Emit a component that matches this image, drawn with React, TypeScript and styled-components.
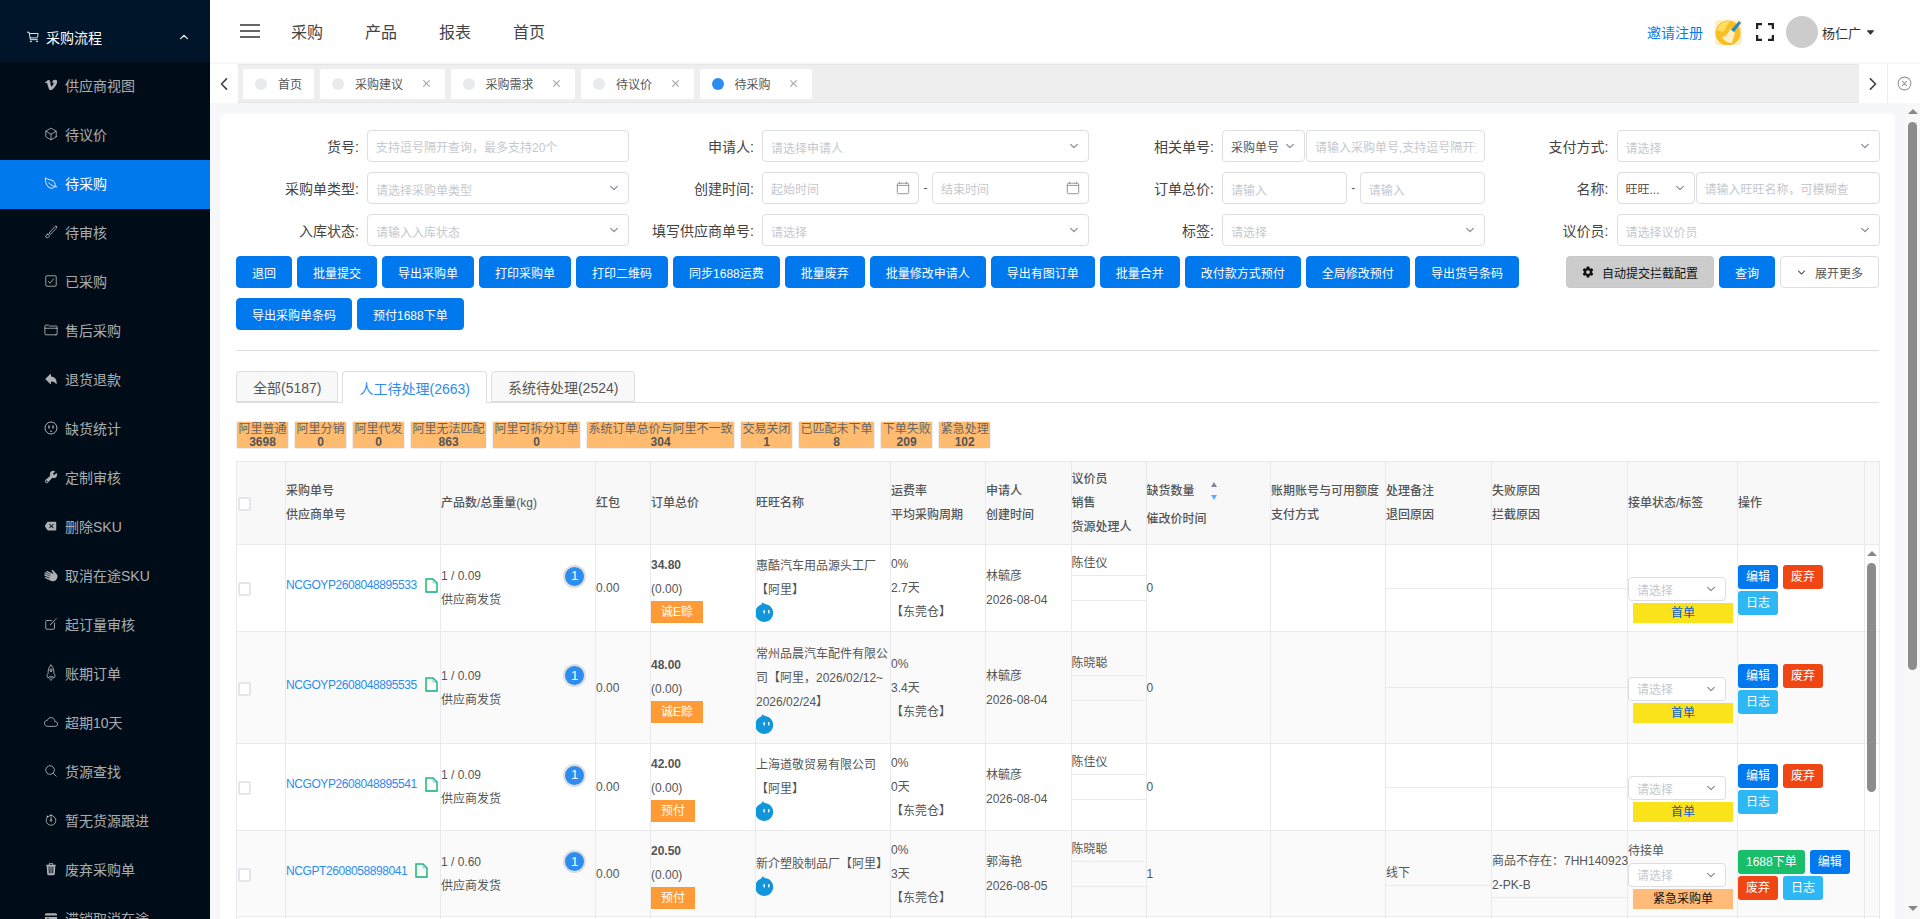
import React from 'react';
import styled, { createGlobalStyle } from 'styled-components';
import {
  IoCartOutline, IoLogoVimeo, IoCubeOutline, IoLeafOutline, IoBrushOutline, IoCheckboxOutline,
  IoFolderOutline, IoArrowUndo, IoBuild, IoBackspace, IoHandLeft, IoCreateOutline, IoRocketOutline,
  IoCloudOutline, IoSearchOutline, IoStopwatchOutline, IoTrash, IoCard, IoChevronUp, IoChevronDown,
  IoChevronBack, IoChevronForward, IoClose, IoCloseCircleOutline, IoCalendarClearOutline, IoSettingsSharp,
  IoCaretDown,
} from 'react-icons/io5';

const GlobalStyle = createGlobalStyle`
  html, body { margin: 0; padding: 0; height: 100%; overflow: hidden; }
  body {
    font-family: "Liberation Sans", "Noto Sans CJK SC", sans-serif;
    font-size: 12px;
    color: #555;
  }
  * { box-sizing: border-box; }
`;

const Page = styled.div`
  display: flex;
  height: 100vh;
  overflow: hidden;
`;

const Sidebar = styled.aside`
  flex: 0 0 210px;
  background: #000c17;
  overflow: hidden;
`;

const MenuTitle = styled.div`
  height: 62px;
  display: flex;
  align-items: center;
  gap: 6px;
  padding: 11px 20px 0 26px;
  background: #001529;
  color: #fff;
  font-size: 14px;
  svg:last-child { margin-left: auto; }
`;

const MenuItem = styled.div<{ $active?: boolean }>`
  height: 49px;
  display: flex;
  align-items: center;
  gap: 7px;
  padding: 0 0 3px 44px;
  font-size: 14px;
  background: ${p => (p.$active ? '#0078ee' : 'transparent')};
  color: ${p => (p.$active ? '#fff' : 'rgba(255,255,255,.68)')};
`;

const LyingHand = styled(IoHandLeft)`
  transform: rotate(-65deg);
`;

const UprightRocket = styled(IoRocketOutline)`
  transform: rotate(-45deg);
`;

const Main = styled.div`
  flex: 1;
  min-width: 0;
  display: flex;
  flex-direction: column;
`;

const Header = styled.header`
  height: 64px;
  flex: none;
  display: flex;
  align-items: center;
  padding: 0 44px 0 30px;
  background: #fff;
`;

const NavLink = styled.span`
  font-size: 16px;
  color: #444;
  margin-right: 42px;
  padding-bottom: 3px;
`;

const Burger = styled.svg`
  margin: -3px 31px 0 0;
`;

const HeaderRight = styled.div`
  margin-left: auto;
  display: flex;
  align-items: center;
  color: #333;
  font-size: 13px;
`;

const Invite = styled.span`
  color: #0a7ce8;
  font-size: 14px;
  margin: 0 12px 0 0;
`;

const Avatar = styled.span`
  width: 32px;
  height: 32px;
  border-radius: 50%;
  background: #ccc;
  margin: 0 4px 0 12px;
`;

const FullscreenBtn = styled.svg`
  margin-left: 14px;
`;

const UserCaret = styled(IoCaretDown)`
  margin-left: 4px;
`;

const TabBar = styled.div`
  height: 39px;
  flex: none;
  display: flex;
  background: #fff;
  box-shadow: 0 -1px 2px rgba(0, 0, 0, .06);
`;

const ArrowBox = styled.div<{ $w: number }>`
  flex: 0 0 ${p => p.$w}px;
  display: flex;
  align-items: center;
  justify-content: center;
  color: #444;
`;

const TabTrack = styled.div`
  flex: 1;
  display: flex;
  align-items: center;
  gap: 6px;
  padding-left: 5px;
  background: #eee;
  border-top: 1px solid #e6e6e6;
  border-bottom: 1px solid #e6e6e6;
`;

const PageTab = styled.div`
  height: 30px;
  display: flex;
  align-items: center;
  padding: 0 12px;
  background: #fff;
  border-radius: 2px;
  color: #555;
`;

const Dot = styled.span<{ $on?: boolean }>`
  width: 12px;
  height: 12px;
  border-radius: 50%;
  margin-right: 11px;
  background: ${p => (p.$on ? '#2d8cf0' : '#e8eaec')};
`;

const TabClose = styled.span`
  display: flex;
  margin-left: 16.5px;
  color: #aaa;
`;

const CloseAll = styled.div`
  flex: 0 0 33px;
  display: flex;
  align-items: center;
  justify-content: center;
  color: #999;
  border-left: 1px solid #eee;
`;

const Content = styled.main`
  position: relative;
  flex: 1;
  min-height: 0;
  overflow: hidden;
  background: #f5f7f9;
  padding: 11px 25px 0 10px;
`;

const Card = styled.section`
  background: #fff;
  border-radius: 4px 4px 0 0;
  padding: 16px 14px 0 16px;
`;

const FilterGrid = styled.div`
  display: grid;
  grid-template-columns: 131px 262px 133px 327px 133px 262.5px 132px 263px;
  grid-auto-rows: 32px;
  row-gap: 10px;
`;

const Label = styled.label`
  display: flex;
  align-items: center;
  justify-content: flex-end;
  padding-right: 8px;
  font-size: 14px;
  color: #444;
  white-space: nowrap;
`;

const Field = styled.div<{ $flex?: number; $w?: number; $h?: number; $pad?: number }>`
  ${p => (p.$w ? `flex: 0 0 ${p.$w}px;` : `flex: ${p.$flex ?? 1};`)}
  min-width: 0;
  height: ${p => p.$h ?? 32}px;
  display: flex;
  align-items: center;
  justify-content: space-between;
  padding: 0 ${p => p.$pad ?? 8}px;
  background: #fff;
  border: 1px solid #dcdee2;
  border-radius: 4px;
  color: #c5c8ce;
  white-space: nowrap;
  overflow: hidden;
  svg { flex: none; color: #808695; }
`;

const Hint = styled.span<{ $low?: boolean }>`
  overflow: hidden;
  padding-top: ${p => (p.$low ? 3 : 0)}px;
`;

const Value = styled.span`
  color: #555;
`;

const Compound = styled.div<{ $gap?: number }>`
  display: flex;
  align-items: center;
  gap: ${p => p.$gap ?? 1}px;
  min-width: 0;
`;

const Dash = styled.span`
  flex: 0 0 13px;
  text-align: center;
  color: #555;
`;

const ActionRow = styled.div`
  display: flex;
  justify-content: space-between;
  align-items: flex-start;
  margin-top: 10px;
  padding-right: 2px;
`;

const ActionGroup = styled.div<{ $w?: number }>`
  display: flex;
  flex-wrap: wrap;
  gap: 10px 5px;
  ${p => (p.$w ? `flex: 0 0 ${p.$w}px;` : '')}
`;

const Button = styled.button<{ $kind?: 'primary' | 'gray' | 'plain' }>`
  height: 32px;
  padding: 0 15px;
  display: inline-flex;
  align-items: center;
  gap: 8px;
  font: inherit;
  border-radius: 4px;
  border: 1px solid ${p => (p.$kind === 'gray' ? '#c8c8c8' : p.$kind === 'plain' ? '#dcdee2' : '#0078ee')};
  background: ${p => (p.$kind === 'gray' ? '#ccc' : p.$kind === 'plain' ? '#fff' : '#0078ee')};
  color: ${p => (p.$kind === 'gray' ? '#111' : p.$kind === 'plain' ? '#555' : '#fff')};
`;

const Divider = styled.hr`
  border: 0;
  border-top: 1px solid #ddd;
  margin: 20px 2px 20px 0;
`;

const ViewTabs = styled.div`
  display: flex;
  gap: 4px;
  height: 32px;
  border-bottom: 1px solid #dcdee2;
  margin-right: 2px;
`;

const ViewTab = styled.div<{ $on?: boolean }>`
  height: ${p => (p.$on ? 32 : 31)}px;
  display: flex;
  align-items: center;
  padding: 0 16px;
  font-size: 14px;
  border: 1px solid #dcdee2;
  border-bottom: ${p => (p.$on ? '0' : '1px solid #dcdee2')};
  border-radius: 4px 4px 0 0;
  background: ${p => (p.$on ? '#fff' : '#f8f8f9')};
  color: ${p => (p.$on ? '#2d8cf0' : '#555')};
`;

const ChipRow = styled.div`
  display: flex;
  gap: 5px;
  margin: 18px 0 12px;
`;

const Chip = styled.div`
  height: 28px;
  padding: 1px 1.5px 0;
  background: #ffbb6f;
  border: 1px solid #eee;
  border-radius: 2px;
  text-align: center;
  line-height: 13px;
  white-space: nowrap;
  color: #666;
  b { display: block; color: #555; }
`;

const TableWrap = styled.div`
  position: relative;
  width: 1642.5px;
`;

const Table = styled.table`
  width: 1642.5px;
  table-layout: fixed;
  border-collapse: collapse;
  background: #fff;
`;

const Th = styled.th`
  padding: 0;
  height: 83px;
  text-align: left;
  font-weight: 500;
  line-height: 24px;
  background: #f8f8f9;
  border: 1px solid #e8eaec;
  color: #555;
`;

const Row = styled.tr<{ $h: number; $even: boolean }>`
  height: ${p => p.$h}px;
  background: ${p => (p.$even ? '#fafafa' : '#fff')};
`;

const Td = styled.td`
  padding: 0;
  line-height: 24px;
  vertical-align: middle;
  border: 1px solid #e8eaec;
  color: #555;
  word-break: break-all;
`;

const CheckBox = styled.span`
  display: block;
  width: 13px;
  height: 14px;
  margin: 2px 0 0 1px;
  background: #fff;
  border: 2px solid #e4e6ea;
  border-radius: 2px;
`;

const OrderLink = styled.div`
  display: flex;
  align-items: center;
  gap: 8px;
  margin-top: -6px;
  color: #2d8cf0;
  letter-spacing: -.42px;
  white-space: nowrap;
`;

const ProductTop = styled.div`
  display: flex;
  justify-content: space-between;
  align-items: center;
  padding-right: 9px;
`;

const CountBadge = styled.span`
  width: 23px;
  height: 23px;
  display: flex;
  align-items: center;
  justify-content: center;
  border-radius: 50%;
  background: #2d8cf0;
  border: 2px solid #ddd;
  color: #fff;
  font-size: 13px;
`;

const PayTag = styled.span`
  display: block;
  width: fit-content;
  height: 22px;
  line-height: 22px;
  padding: 0 10px;
  background: #ff9b37;
  color: #fff;
`;

const Nowrap = styled.span`
  display: inline-block;
  white-space: nowrap;
`;

const WangIcon = styled.svg`
  display: block;
`;

const StackLine = styled.div<{ $last?: boolean }>`
  height: ${p => (p.$last ? 24 : 25)}px;
  line-height: 24px;
  ${p => (p.$last ? '' : 'border-bottom: 1px solid #e8eaec;')}
`;

const RuleLine = styled.div`
  border-bottom: 1px solid #e8eaec;
  white-space: nowrap;
`;

const StatusLine = styled.div`
  height: 24px;
`;

const StateTag = styled.div<{ $urgent?: boolean }>`
  width: 100px;
  height: 20px;
  line-height: 20px;
  margin: 2px 0 0 5px;
  text-align: center;
  background: ${p => (p.$urgent ? '#ffbb77' : '#fae31a')};
  color: ${p => (p.$urgent ? '#111' : '#0a5ec9')};
`;

const SelectSlot = styled.div`
  width: 98px;
`;

const OpGrid = styled.div<{ $w: number }>`
  display: flex;
  flex-wrap: wrap;
  gap: 2px 5px;
  width: ${p => p.$w}px;
  margin-top: 3px;
`;

const OpButton = styled.span<{ $bg: string }>`
  height: 24px;
  line-height: 24px;
  padding: 0 8px;
  border-radius: 3px;
  background: ${p => p.$bg};
  color: #fff;
  white-space: nowrap;
`;

const SortLine = styled.div`
  display: flex;
  align-items: center;
  gap: 16px;
  height: 32px;
`;

const SortCarets = styled.span`
  display: flex;
  flex-direction: column;
  gap: 8px;
`;

const Caret = styled.i<{ $up?: boolean; $color: string }>`
  width: 0;
  height: 0;
  border-left: 3.5px solid transparent;
  border-right: 3.5px solid transparent;
  ${p => (p.$up ? `border-bottom: 5px solid ${p.$color};` : `border-top: 5px solid ${p.$color};`)}
`;

const ScrollThumb = styled.div<{ $top: number; $h: number; $left: number }>`
  position: absolute;
  top: ${p => p.$top}px;
  left: ${p => p.$left}px;
  width: 9px;
  height: ${p => p.$h}px;
  border-radius: 5px;
  background: #8c8c8c;
`;

const ScrollArrow = styled.div<{ $top: number; $left: number; $down?: boolean }>`
  position: absolute;
  top: ${p => p.$top}px;
  left: ${p => p.$left}px;
  width: 0;
  height: 0;
  border-left: 5px solid transparent;
  border-right: 5px solid transparent;
  ${p => (p.$down ? 'border-top: 5px solid #888;' : 'border-bottom: 5px solid #888;')}
`;

const PageTrack = styled.div`
  position: absolute;
  top: 0;
  right: 0;
  bottom: 0;
  width: 15px;
  background: #f8f8f8;
`;

const menu: [React.ComponentType<{ size?: number }>, string][] = [
  [IoLogoVimeo, '供应商视图'],
  [IoCubeOutline, '待议价'],
  [IoLeafOutline, '待采购'],
  [IoBrushOutline, '待审核'],
  [IoCheckboxOutline, '已采购'],
  [IoFolderOutline, '售后采购'],
  [IoArrowUndo, '退货退款'],
  [OutletIcon, '缺货统计'],
  [IoBuild, '定制审核'],
  [IoBackspace, '删除SKU'],
  [LyingHand, '取消在途SKU'],
  [IoCreateOutline, '起订量审核'],
  [UprightRocket, '账期订单'],
  [IoCloudOutline, '超期10天'],
  [IoSearchOutline, '货源查找'],
  [IoStopwatchOutline, '暂无货源跟进'],
  [IoTrash, '废弃采购单'],
  [IoCard, '滞销取消在途'],
];

function OutletIcon({ size = 14 }: { size?: number }) {
  return (
    <svg width={size} height={size} viewBox="0 0 14 14" fill="none" stroke="currentColor">
      <circle cx="7" cy="7" r="6" />
      <path d="M5 4.5v3M9 4.5v3M7 9.5v1.5" strokeWidth="1.4" />
    </svg>
  );
}

const pageTabs = [
  { name: '首页', fixed: true },
  { name: '采购建议' },
  { name: '采购需求' },
  { name: '待议价' },
  { name: '待采购', on: true },
];

const actions = ['退回', '批量提交', '导出采购单', '打印采购单', '打印二维码', '同步1688运费', '批量废弃', '批量修改申请人', '导出有图订单', '批量合并', '改付款方式预付', '全局修改预付', '导出货号条码', '导出采购单条码', '预付1688下单'];

const chips = [
  ['阿里普通', '3698'], ['阿里分销', '0'], ['阿里代发', '0'], ['阿里无法匹配', '863'], ['阿里可拆分订单', '0'],
  ['系统订单总价与阿里不一致', '304'], ['交易关闭', '1'], ['已匹配未下单', '8'], ['下单失败', '209'], ['紧急处理', '102'],
];

const colWidths = [49, 155, 155, 55, 105, 135, 95, 85.5, 75, 124.5, 115, 106, 136, 110, 127, 14.5];

interface OrderRow {
  no: string;
  weight: string;
  total: string;
  pay: string;
  shop: React.ReactNode;
  cycle: string;
  requester: string;
  date: string;
  buyer: string;
  qty: string;
  height: number;
  offline?: boolean;
}

const rows: OrderRow[] = [
  { no: 'NCGOYP2608048895533', weight: '0.09', total: '34.80', pay: '诚E赊', shop: <>惠酷汽车用品源头工厂<Nowrap>【阿里】</Nowrap></>, cycle: '2.7天', requester: '林毓彦', date: '2026-08-04', buyer: '陈佳仪', qty: '0', height: 87 },
  { no: 'NCGOYP2608048895535', weight: '0.09', total: '48.00', pay: '诚E赊', shop: <>常州品晨汽车配件有限公司【阿里，2026/02/12~<Nowrap>2026/02/24】</Nowrap></>, cycle: '3.4天', requester: '林毓彦', date: '2026-08-04', buyer: '陈晓聪', qty: '0', height: 112 },
  { no: 'NCGOYP2608048895541', weight: '0.09', total: '42.00', pay: '预付', shop: <>上海道敬贸易有限公司<Nowrap>【阿里】</Nowrap></>, cycle: '0天', requester: '林毓彦', date: '2026-08-04', buyer: '陈佳仪', qty: '0', height: 87 },
  { no: 'NCGPT2608058898041', weight: '0.60', total: '20.50', pay: '预付', shop: <>新介塑胶制品厂<Nowrap>【阿里】</Nowrap></>, cycle: '3天', requester: '郭海艳', date: '2026-08-05', buyer: '陈晓聪', qty: '1', height: 86, offline: true },
];

function DocIcon() {
  return (
    <svg width="13" height="15" viewBox="0 0 13 15" fill="none">
      <path d="M1 1h7l4 4v9H1z" stroke="#19be6b" strokeWidth="1.5" />
      <path d="M8 1v4h4" stroke="#2d8cf0" strokeOpacity=".5" strokeWidth="1" />
      <path d="M1.5 14h10.5" stroke="#2d8cf0" strokeOpacity=".5" />
    </svg>
  );
}

function WangWang() {
  return (
    <WangIcon width="19" height="20" viewBox="0 0 19 20">
      <path d="M7 0c.4 1 1 1.600 2 2a9 9 0 1 1-6.500 2C4.500 3.200 6 2 7 0z" fill="#1296db" />
      <rect x="7.400" y="8" width="1.500" height="3.500" rx=".7" fill="#fff" />
      <rect x="12" y="8" width="1.500" height="3.500" rx=".7" fill="#fff" />
    </WangIcon>
  );
}

function BroomLogo() {
  return (
    <svg width="27" height="25" viewBox="0 0 27 25">
      <rect width="27" height="25" rx="3" fill="#fdf0c4" />
      <circle cx="13" cy="13" r="12.500" fill="#f8bf22" />
      <path d="M2 10a12 12 0 0 1 13-9L8 12z" fill="#ffdc62" />
      <path d="M24 1l2 2-7 9-3-2z" fill="#2a86c9" />
      <path d="M15 9l5 4-3 10c-4 0-8-2-10-6 3 0 6-3 8-8z" fill="#fdeec4" />
    </svg>
  );
}

function SelectField({ hint, w, h, low = true }: { hint: string; w?: number; h?: number; low?: boolean }) {
  return (
    <Field $w={w} $h={h}>
      <Hint $low={low}>{hint}</Hint>
      <IoChevronDown size={12} />
    </Field>
  );
}

export default function App() {
  return (
    <Page>
      <GlobalStyle />
      <Sidebar>
        <MenuTitle>
          <IoCartOutline size={14} />
          采购流程
          <IoChevronUp size={12} />
        </MenuTitle>
        {menu.map(([Icon, name]) => (
          <MenuItem key={name} $active={name === '待采购'}>
            <Icon size={14} />
            {name}
          </MenuItem>
        ))}
      </Sidebar>
      <Main>
        <Header>
          <Burger width="20" height="14" viewBox="0 0 20 14" stroke="#666" strokeWidth="2">
            <path d="M0 1h20M0 7h20M0 13h20" />
          </Burger>
          <NavLink>采购</NavLink>
          <NavLink>产品</NavLink>
          <NavLink>报表</NavLink>
          <NavLink>首页</NavLink>
          <HeaderRight>
            <Invite>邀请注册</Invite>
            <BroomLogo />
            <FullscreenBtn width="18" height="18" viewBox="0 0 18 18" fill="none" stroke="#222" strokeWidth="2.5">
              <path d="M1 6V1h5M12 1h5v5M17 12v5h-5M6 17H1v-5" />
            </FullscreenBtn>
            <Avatar />
            杨仁广
            <UserCaret size={11} />
          </HeaderRight>
        </Header>
        <TabBar>
          <ArrowBox $w={28}><IoChevronBack size={18} /></ArrowBox>
          <TabTrack>
            {pageTabs.map(t => (
              <PageTab key={t.name}>
                <Dot $on={t.on} />
                {t.name}
                {!t.fixed && <TabClose><IoClose size={13} /></TabClose>}
              </PageTab>
            ))}
          </TabTrack>
          <ArrowBox $w={28}><IoChevronForward size={18} /></ArrowBox>
          <CloseAll><IoCloseCircleOutline size={17} /></CloseAll>
        </TabBar>
        <Content>
          <PageTrack />
          <ScrollArrow $top={6} $left={1698} />
          <ScrollThumb $top={19} $h={548} $left={1698} />
          <ScrollArrow $top={803} $left={1698} $down />
          <Card>
            <FilterGrid>
              <Label>货号:</Label>
              <Field><Hint>支持逗号隔开查询，最多支持20个</Hint></Field>
              <Label>申请人:</Label>
              <SelectField hint="请选择申请人" />
              <Label>相关单号:</Label>
              <Compound>
                <Field $w={83}><Value>采购单号</Value><IoChevronDown size={12} /></Field>
                <Field><Hint>请输入采购单号,支持逗号隔开查询</Hint></Field>
              </Compound>
              <Label>支付方式:</Label>
              <SelectField hint="请选择" />

              <Label>采购单类型:</Label>
              <SelectField hint="请选择采购单类型" />
              <Label>创建时间:</Label>
              <Compound $gap={0}>
                <Field><Hint>起始时间</Hint><IoCalendarClearOutline size={14} /></Field>
                <Dash>-</Dash>
                <Field><Hint>结束时间</Hint><IoCalendarClearOutline size={14} /></Field>
              </Compound>
              <Label>订单总价:</Label>
              <Compound $gap={0}>
                <Field><Hint $low>请输入</Hint></Field>
                <Dash>-</Dash>
                <Field><Hint $low>请输入</Hint></Field>
              </Compound>
              <Label>名称:</Label>
              <Compound>
                <Field $w={78}><Value>旺旺...</Value><IoChevronDown size={12} /></Field>
                <Field><Hint>请输入旺旺名称，可模糊查</Hint></Field>
              </Compound>

              <Label>入库状态:</Label>
              <SelectField hint="请输入入库状态" />
              <Label>填写供应商单号:</Label>
              <SelectField hint="请选择" />
              <Label>标签:</Label>
              <SelectField hint="请选择" />
              <Label>议价员:</Label>
              <SelectField hint="请选择议价员" />
            </FilterGrid>

            <ActionRow>
              <ActionGroup $w={1320}>
                {actions.map(a => <Button key={a}>{a}</Button>)}
              </ActionGroup>
              <ActionGroup>
                <Button $kind="gray"><IoSettingsSharp size={12} />自动提交拦截配置</Button>
                <Button>查询</Button>
                <Button $kind="plain"><IoChevronDown size={11} />展开更多</Button>
              </ActionGroup>
            </ActionRow>

            <Divider />

            <ViewTabs>
              <ViewTab>全部(5187)</ViewTab>
              <ViewTab $on>人工待处理(2663)</ViewTab>
              <ViewTab>系统待处理(2524)</ViewTab>
            </ViewTabs>

            <ChipRow>
              {chips.map(([name, count]) => (
                <Chip key={name}>{name}<b>{count}</b></Chip>
              ))}
            </ChipRow>

            <TableWrap>
              <Table>
                <colgroup>
                  {colWidths.map((w, i) => <col key={i} width={w} />)}
                </colgroup>
                <thead>
                  <tr>
                    <Th><CheckBox /></Th>
                    <Th>采购单号<br />供应商单号</Th>
                    <Th>产品数/总重量(kg)</Th>
                    <Th>红包</Th>
                    <Th>订单总价</Th>
                    <Th>旺旺名称</Th>
                    <Th>运费率<br />平均采购周期</Th>
                    <Th>申请人<br />创建时间</Th>
                    <Th>议价员<br />销售<br />货源处理人</Th>
                    <Th>
                      <SortLine>
                        缺货数量
                        <SortCarets><Caret $up $color="#808695" /><Caret $color="#5cadff" /></SortCarets>
                      </SortLine>
                      催改价时间
                    </Th>
                    <Th>账期账号与可用额度<br />支付方式</Th>
                    <Th>处理备注<br />退回原因</Th>
                    <Th>失败原因<br />拦截原因</Th>
                    <Th>接单状态/标签</Th>
                    <Th>操作</Th>
                    <Th />
                  </tr>
                </thead>
                <tbody>
                  {rows.map((r, i) => (
                    <Row key={r.no} $h={r.height} $even={i % 2 === 1}>
                      <Td><CheckBox /></Td>
                      <Td><OrderLink>{r.no}<DocIcon /></OrderLink></Td>
                      <Td>
                        <ProductTop>1 / {r.weight}<CountBadge>1</CountBadge></ProductTop>
                        供应商发货
                      </Td>
                      <Td>0.00</Td>
                      <Td>
                        <b>{r.total}</b><br />(0.00)
                        <PayTag>{r.pay}</PayTag>
                      </Td>
                      <Td>{r.shop}<WangWang /></Td>
                      <Td>0%<br />{r.cycle}<br />【东莞仓】</Td>
                      <Td>{r.requester}<br />{r.date}</Td>
                      <Td>
                        <StackLine>{r.buyer}</StackLine>
                        <StackLine />
                        <StackLine $last />
                      </Td>
                      <Td>{r.qty}</Td>
                      <Td />
                      <Td><RuleLine>{r.offline ? '线下' : null}</RuleLine></Td>
                      <Td>
                        <RuleLine>{r.offline ? <>商品不存在：7HH140923<br />2-PK-B</> : null}</RuleLine>
                      </Td>
                      <Td>
                        <StatusLine>{r.offline && '待接单'}</StatusLine>
                        <SelectSlot><SelectField hint="请选择" h={24} /></SelectSlot>
                        <StateTag $urgent={r.offline}>{r.offline ? '紧急采购单' : '首单'}</StateTag>
                      </Td>
                      <Td>
                        {r.offline ? (
                          <OpGrid $w={120}>
                            <OpButton $bg="#19be6b">1688下单</OpButton>
                            <OpButton $bg="#0078ee">编辑</OpButton>
                            <OpButton $bg="#f04614">废弃</OpButton>
                            <OpButton $bg="#2db7f5">日志</OpButton>
                          </OpGrid>
                        ) : (
                          <OpGrid $w={90}>
                            <OpButton $bg="#0078ee">编辑</OpButton>
                            <OpButton $bg="#f04614">废弃</OpButton>
                            <OpButton $bg="#2db7f5">日志</OpButton>
                          </OpGrid>
                        )}
                      </Td>
                      <Td />
                    </Row>
                  ))}
                  <Row $h={60} $even={false}>
                    {colWidths.map((_, i) => <Td key={i} />)}
                  </Row>
                </tbody>
              </Table>
              <ScrollArrow $top={90} $left={1631} />
              <ScrollThumb $top={102} $h={229} $left={1631} />
            </TableWrap>
          </Card>
        </Content>
      </Main>
    </Page>
  );
}
